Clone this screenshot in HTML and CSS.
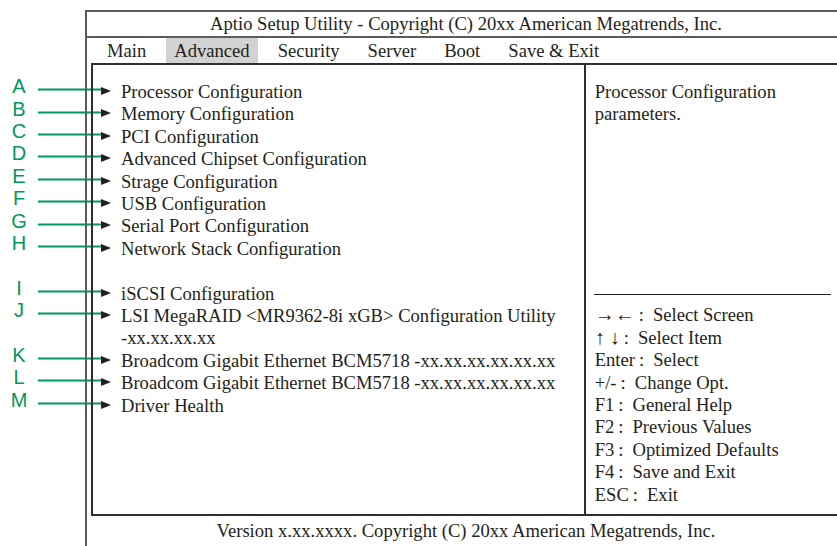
FILE: index.html
```html
<!DOCTYPE html>
<html lang="en">

<head>
  <meta charset="UTF-8">
  <meta name="viewport" content="width=device-width, initial-scale=1.0">
  <title>Aptio Setup Utility - Advanced</title>
  <link rel="stylesheet" href="styles.css">
</head>

<body>
  <div class="screen">
    <div class="title">Aptio Setup Utility - Copyright (C) 20xx American Megatrends, Inc.</div>

    <ul class="menu">
      <li>Main</li>
      <li class="active">Advanced</li>
      <li>Security</li>
      <li>Server</li>
      <li>Boot</li>
      <li>Save &amp; Exit</li>
    </ul>

    <div class="main">
      <ul class="items">
        <li class="item"><span class="callout"><b>A</b><i></i></span><span class="mark"></span><span>Processor Configuration</span></li>
        <li class="item"><span class="callout"><b>B</b><i></i></span><span class="mark"></span><span>Memory Configuration</span></li>
        <li class="item"><span class="callout"><b>C</b><i></i></span><span class="mark"></span><span>PCI Configuration</span></li>
        <li class="item"><span class="callout"><b>D</b><i></i></span><span class="mark"></span><span>Advanced Chipset Configuration</span></li>
        <li class="item"><span class="callout"><b>E</b><i></i></span><span class="mark"></span><span>Strage Configuration</span></li>
        <li class="item"><span class="callout"><b>F</b><i></i></span><span class="mark"></span><span>USB Configuration</span></li>
        <li class="item"><span class="callout"><b>G</b><i></i></span><span class="mark"></span><span>Serial Port Configuration</span></li>
        <li class="item"><span class="callout"><b>H</b><i></i></span><span class="mark"></span><span>Network Stack Configuration</span></li>
        <li class="item spacer"></li>
        <li class="item"><span class="callout"><b>I</b><i></i></span><span class="mark"></span><span>iSCSI Configuration</span></li>
        <li class="item"><span class="callout"><b>J</b><i></i></span><span class="mark"></span><span>LSI MegaRAID &lt;MR9362-8i xGB&gt; Configuration Utility<br>-xx.xx.xx.xx</span></li>
        <li class="item"><span class="callout"><b>K</b><i></i></span><span class="mark"></span><span>Broadcom Gigabit Ethernet BCM5718 -xx.xx.xx.xx.xx.xx</span></li>
        <li class="item"><span class="callout"><b>L</b><i></i></span><span class="mark"></span><span>Broadcom Gigabit Ethernet BCM5718 -xx.xx.xx.xx.xx.xx</span></li>
        <li class="item"><span class="callout"><b>M</b><i></i></span><span class="mark"></span><span>Driver Health</span></li>
      </ul>

      <div class="side">
        <p class="desc">Processor Configuration<br>parameters.</p>
        <ul class="keys">
          <li><span class="arrows">→←</span><span class="colon">:</span>Select Screen</li>
          <li><span class="arrows">↑&nbsp;↓</span><span class="colon">:</span>Select Item</li>
          <li>Enter<span class="colon">:</span>Select</li>
          <li>+/-<span class="colon">:</span>Change Opt.</li>
          <li>F1<span class="colon">:</span>General Help</li>
          <li>F2<span class="colon">:</span>Previous Values</li>
          <li>F3<span class="colon">:</span>Optimized Defaults</li>
          <li>F4<span class="colon">:</span>Save and Exit</li>
          <li>ESC<span class="colon">:</span>Exit</li>
        </ul>
      </div>
    </div>

    <div class="footer">Version x.xx.xxxx. Copyright (C) 20xx American Megatrends, Inc.</div>
  </div>
</body>

</html>
```

FILE: styles.css
```css
html {
  background: #fff;
}

body {
  margin: 0;
  height: 546px;
  overflow: hidden;
  font-family: "Liberation Serif", "Times New Roman", serif;
  font-size: 18.6px;
  color: #231f20;
}

ul {
  list-style: none;
  margin: 0;
  padding: 0;
}

.screen {
  margin: 10px 0 0 85px;
  width: 758px;
  height: 536px;
  border-left: 2px solid #5c5c5c;
  border-top: 2px solid #5c5c5c;
}

.title {
  height: 24px;
  line-height: 24px;
  text-align: center;
  border-bottom: 2px solid #5c5c5c;
}

.menu {
  display: flex;
  gap: 12px;
  padding-left: 12px;
  height: 25px;
  line-height: 25px;
}

.menu li {
  padding: 0 8px;
}

.menu .active {
  background-color: #d2d2d2;
}

/* inner box with item list and help column */
.main {
  display: flex;
  margin-left: 4px;
  height: 449px;
  border-left: 2px solid #2e2e2e;
  border-top: 2px solid #2e2e2e;
  border-bottom: 2px solid #2e2e2e;
}

.items {
  width: 484px;
  padding: 16px 0 0 8px;
  border-right: 2px solid #2e2e2e;
  line-height: 22.4px;
}

.item {
  position: relative;
  display: flex;
  align-items: flex-start;
  min-height: 22.4px;
}

.mark {
  flex: none;
  width: 0;
  height: 0;
  margin: 6px 10px 0 0;
  border-left: 10px solid #231f20;
  border-top: 4.5px solid transparent;
  border-bottom: 4.5px solid transparent;
}

/* green callout letters pointing at each entry */
.callout {
  position: absolute;
  top: 0;
  right: 100%;
  width: 101px;
  height: 22.4px;
  display: flex;
  align-items: center;
  z-index: -1;
  transform: translateY(-2.5px);
}

.callout b {
  width: 38px;
  text-align: center;
  font-family: "Liberation Sans", Arial, sans-serif;
  font-weight: normal;
  font-size: 20px;
  line-height: 20px;
  color: #00995a;
  transform: translateY(-4px);
}

.callout i {
  flex: 1;
  height: 2px;
  background: #00995a;
}

.side {
  width: 260px;
  display: flex;
  flex-direction: column;
  justify-content: space-between;
  line-height: 22.4px;
}

.desc {
  margin: 0;
  padding: 16px 0 0 9px;
}

.keys {
  margin: 0 14px 0 8px;
  padding: 9px 0 8px 1px;
  border-top: 1px solid #231f20;
}

.keys li {
  white-space: nowrap;
  height: 22.4px;
}

.arrows {
  font-size: 20px;
  line-height: 16px;
  white-space: nowrap;
}

.colon {
  margin: 0 9px 0 4px;
}

.footer {
  height: 30px;
  line-height: 30px;
  text-align: center;
}
```
